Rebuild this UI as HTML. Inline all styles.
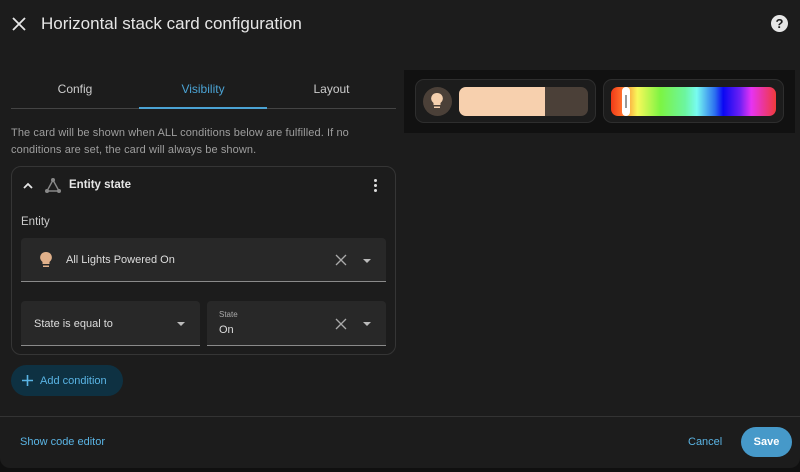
<!DOCTYPE html>
<html><head><style>
*{box-sizing:border-box;margin:0;padding:0}
body{width:800px;height:472px;background:#101010;font-family:"Liberation Sans",sans-serif;position:relative;overflow:hidden;color:#e1e1e1}
.dlg{position:absolute;left:0;top:0;width:800px;height:468px;background:#1c1c1c;border-radius:0 0 10px 10px}
.a{position:absolute}
.field{position:absolute;background:#282828;border-bottom:1px solid #8a8a8a;border-radius:4px 4px 0 0}
.tri{position:absolute;width:0;height:0;border-left:4px solid transparent;border-right:4px solid transparent;border-top:4px solid #bbb}
</style></head><body>
<div class="dlg">
<svg class="a" style="left:12px;top:17px" width="14" height="14" viewBox="0 0 14 14"><path d="M1 1L13 13M13 1L1 13" stroke="#e6e6e6" stroke-width="1.8"/></svg>
<div class="a" style="left:41px;top:14px;font-size:17px;color:#e6e6e6">Horizontal stack card configuration</div>
<div class="a" style="left:771px;top:15px;width:17px;height:17px;border-radius:50%;background:#e6e6e6;color:#1c1c1c;font-size:13px;font-weight:bold;text-align:center;line-height:17px">?</div>

<div class="a" style="left:11px;top:108px;width:385px;height:1px;background:#444"></div>
<div class="a" style="left:139px;top:107px;width:128px;height:2px;background:#4ba3d4"></div>
<div class="a" style="left:11px;top:82px;width:128px;text-align:center;font-size:12px;color:#ccc">Config</div>
<div class="a" style="left:139px;top:82px;width:128px;text-align:center;font-size:12px;color:#4ba3d4">Visibility</div>
<div class="a" style="left:267px;top:82px;width:129px;text-align:center;font-size:12px;color:#ccc">Layout</div>

<div class="a" style="left:11px;top:125px;font-size:11px;line-height:17px;color:#9e9e9e;width:372px;letter-spacing:0.1px">The card will be shown when ALL conditions below are fulfilled. If no conditions are set, the card will always be shown.</div>

<div class="a" style="left:11px;top:166px;width:385px;height:189px;border:1px solid #353535;border-radius:10px"></div>
<svg class="a" style="left:22px;top:181px" width="12" height="10" viewBox="0 0 12 10"><path d="M2 7L6 3L10 7" stroke="#e6e6e6" stroke-width="1.8" fill="none"/></svg>
<svg class="a" style="left:44px;top:177px" width="18" height="18" viewBox="0 0 18 18"><path d="M9 3L3 14H15Z" stroke="#888" stroke-width="1.4" fill="none"/><circle cx="9" cy="3" r="2" fill="#888"/><circle cx="3" cy="14" r="2" fill="#888"/><circle cx="15" cy="14" r="2" fill="#888"/></svg>
<div class="a" style="left:69px;top:179px;font-size:11.5px;font-weight:bold;color:#e6e6e6">Entity state</div>
<div class="a" style="left:374px;top:179px;width:3px;font-size:0">
<div style="width:3px;height:3px;background:#ddd;border-radius:50%;margin-bottom:2px"></div><div style="width:3px;height:3px;background:#ddd;border-radius:50%;margin-bottom:2px"></div><div style="width:3px;height:3px;background:#ddd;border-radius:50%"></div></div>

<div class="a" style="left:21px;top:216px;font-size:11.5px;color:#ccc">Entity</div>
<div class="field" style="left:21px;top:238px;width:365px;height:44px"></div>
<svg class="a" style="left:39px;top:251px" width="14" height="18" viewBox="0 0 14 18"><path d="M7 1A5.5 5.5 0 0 0 3.5 11V13H10.5V11A5.5 5.5 0 0 0 7 1Z" fill="#e0b08a"/><rect x="4" y="14.5" width="6" height="1.5" fill="#e0b08a"/></svg>
<div class="a" style="left:66px;top:254px;font-size:11px;color:#ddd">All Lights Powered On</div>
<svg class="a" style="left:335px;top:254px" width="12" height="12" viewBox="0 0 12 12"><path d="M1 1L11 11M11 1L1 11" stroke="#aaa" stroke-width="1.3"/></svg>
<div class="tri" style="left:363px;top:259px"></div>

<div class="field" style="left:21px;top:301px;width:179px;height:45px"></div>
<div class="a" style="left:34px;top:318px;font-size:11px;color:#ddd">State is equal to</div>
<div class="tri" style="left:177px;top:322px"></div>
<div class="field" style="left:207px;top:301px;width:179px;height:45px"></div>
<div class="a" style="left:219px;top:310px;font-size:8px;color:#aaa">State</div>
<div class="a" style="left:219px;top:324px;font-size:11px;color:#ddd">On</div>
<svg class="a" style="left:335px;top:318px" width="12" height="12" viewBox="0 0 12 12"><path d="M1 1L11 11M11 1L1 11" stroke="#aaa" stroke-width="1.3"/></svg>
<div class="tri" style="left:363px;top:322px"></div>

<div class="a" style="left:11px;top:365px;width:112px;height:31px;border-radius:16px;background:#0e3142"></div>
<svg class="a" style="left:21px;top:374px" width="13" height="13" viewBox="0 0 13 13"><path d="M6.5 1V12M1 6.5H12" stroke="#5ab4e4" stroke-width="1.6"/></svg>
<div class="a" style="left:40px;top:375px;font-size:11px;color:#5ab4e4">Add condition</div>

<div class="a" style="left:0;top:416px;width:800px;height:1px;background:#333"></div>
<div class="a" style="left:20px;top:436px;font-size:11px;color:#5ab4e4">Show code editor</div>
<div class="a" style="left:688px;top:436px;font-size:11px;color:#5ab4e4">Cancel</div>
<div class="a" style="left:741px;top:427px;width:51px;height:30px;border-radius:15px;background:#4699c9;color:#fff;font-size:11px;font-weight:bold;text-align:center;line-height:30px">Save</div>

<div class="a" style="left:404px;top:70px;width:391px;height:63px;background:#111"></div>
<div class="a" style="left:415px;top:79px;width:181px;height:44px;border:1px solid #2e2e2e;border-radius:9px;background:#1c1c1c"></div>
<div class="a" style="left:423px;top:87px;width:29px;height:29px;border-radius:50%;background:#4b4038"></div>
<svg class="a" style="left:430px;top:92px" width="14" height="18" viewBox="0 0 14 18"><path d="M7 1A5.5 5.5 0 0 0 3.5 11V13H10.5V11A5.5 5.5 0 0 0 7 1Z" fill="#f5d0ae"/><rect x="4" y="14.5" width="6" height="1.5" fill="#f5d0ae"/></svg>
<div class="a" style="left:459px;top:87px;width:129px;height:29px;border-radius:7px;background:#4b4038;overflow:hidden"><div style="width:86px;height:29px;background:#f7d0ae"></div></div>
<div class="a" style="left:603px;top:79px;width:181px;height:44px;border:1px solid #2e2e2e;border-radius:9px;background:#1c1c1c"></div>
<div class="a" style="left:611px;top:87px;width:165px;height:29px;border-radius:7px;background:linear-gradient(90deg,#f03a17 0%,#ff6a2a 6%,#f8f85a 16%,#7cf443 30%,#6cf5a0 45%,#78fbf0 52%,#2b6ff0 63%,#0a08f2 68%,#6a1ff5 78%,#e633f3 85%,#f03a3a 100%)"></div>
<div class="a" style="left:622px;top:87px;width:8px;height:29px;border-radius:4px;background:#fff"><div style="margin:8px auto 0;width:2px;height:13px;background:#999"></div></div>
</div>
</body></html>
